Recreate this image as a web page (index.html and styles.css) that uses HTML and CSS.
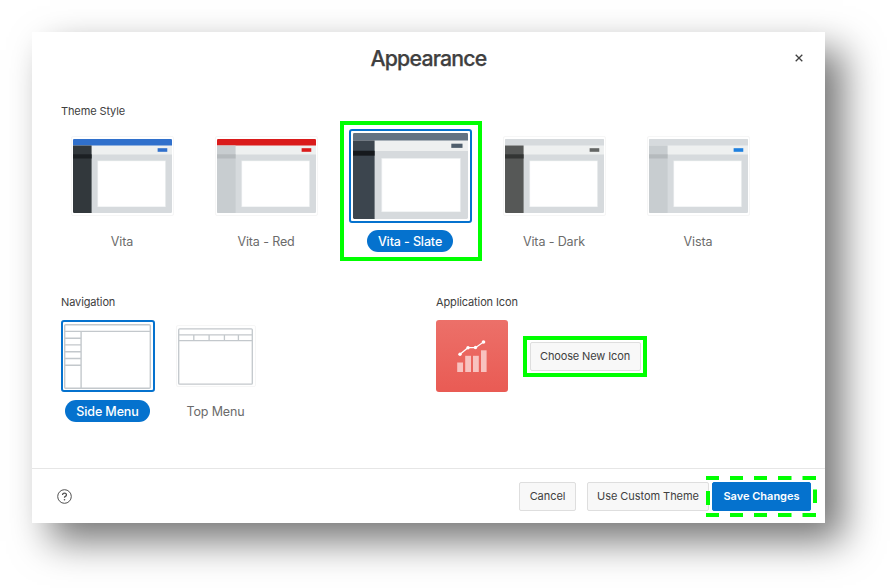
FILE: index.html
```html
<!DOCTYPE html>
<html lang="en">
<head>
<meta charset="utf-8">
<title>Appearance</title>
<link rel="stylesheet" href="styles.css">
</head>
<body>
<svg width="0" height="0" class="defs" aria-hidden="true">
  <symbol id="theme" viewBox="0 0 98.5 74" preserveAspectRatio="none">
    <rect width="98.5" height="74" rx="1.2" fill="#d6dadd"/>
    <rect y="6" width="98.5" height="9.5" fill="#eef0f0"/>
    <path d="M0 6.4V1.2Q0 0 1.2 0H97.3Q98.5 0 98.5 1.2V6.4Z" fill="var(--head)"/>
    <path d="M0 6.4H18.5V74H1.2Q0 74 0 72.8Z" fill="var(--side)"/>
    <rect y="15.3" width="18.5" height="4.2" fill="var(--current)"/>
    <rect x="84.2" y="9.2" width="9.6" height="3.6" fill="var(--accent)"/>
    <rect x="24.3" y="21.6" width="68" height="46.4" fill="#eceff0"/>
    <rect x="25" y="22.2" width="66.6" height="45.2" fill="#fff"/>
  </symbol>
</svg>
<main class="dialog">
  <header class="header">
    <h1>Appearance</h1>
    <button class="close" aria-label="Close"><svg width="8" height="8" viewBox="0 0 8 8"><path d="M.7.7 7.3 7.3M7.3.7.7 7.3" fill="none" stroke="#404040" stroke-width="1.3"/></svg></button>
  </header>
  <section class="body">
    <h2>Theme Style</h2>
    <div class="themes">
      <div class="option vita"><div class="frame"><span class="thumb"><svg><use href="#theme"/></svg></span></div><span class="label">Vita</span></div>
      <div class="option red"><div class="frame"><span class="thumb"><svg><use href="#theme"/></svg></span></div><span class="label">Vita - Red</span></div>
      <div class="option slate selected"><div class="frame"><span class="thumb"><svg><use href="#theme"/></svg></span></div><span class="label">Vita - Slate</span><i class="mark"></i></div>
      <div class="option dark"><div class="frame"><span class="thumb"><svg><use href="#theme"/></svg></span></div><span class="label">Vita - Dark</span></div>
      <div class="option vista"><div class="frame"><span class="thumb"><svg><use href="#theme"/></svg></span></div><span class="label">Vista</span></div>
    </div>
    <div class="lower">
      <div class="navigation">
        <h2>Navigation</h2>
        <div class="menus">
          <div class="option selected"><div class="frame"><span class="thumb"><svg viewBox="0 0 87 65"><g fill="none" stroke="#c3c8cc" stroke-width="1.4"><rect x=".7" y=".7" width="85.6" height="63.6" rx="1"/><path d="M1 7.4H86M17.1 7.4V64M1 14.2H17M1 20.9H17M1 27.7H17M1 34.5H17M1 41.2H17"/></g></svg></span></div><span class="label">Side Menu</span></div>
          <div class="option"><div class="frame"><span class="thumb"><svg viewBox="0 0 74 56"><g fill="none" stroke="#c3c8cc" stroke-width="1.3"><rect x=".7" y=".7" width="72.6" height="54.6" rx="1"/><path d="M1 6.6H73M1 12.3H73M15.6 6.6V12.3M30.7 6.6V12.3M45.8 6.6V12.3M59.6 6.6V12.3"/></g></svg></span></div><span class="label">Top Menu</span></div>
        </div>
      </div>
      <div class="application">
        <h2>Application Icon</h2>
        <div class="icon-row">
          <span class="app-icon"><svg width="72" height="72" viewBox="0 0 72 72"><g fill="#f8c2bf"><rect x="21.2" y="42.5" width="5.8" height="9.5"/><rect x="29.2" y="35.8" width="5.8" height="16.2"/><rect x="37" y="35.8" width="5.8" height="16.2"/><rect x="45" y="30.3" width="5.6" height="21.7"/></g><path d="M24 34.3 32 27.7H39.5L47.5 22" fill="none" stroke="#fff" stroke-width="1.2"/><g fill="#fff"><circle cx="24" cy="34.3" r="1.7"/><circle cx="32" cy="27.7" r="1.7"/><circle cx="39.5" cy="27.5" r="1.7"/><circle cx="47.5" cy="22" r="1.8"/></g></svg></span>
          <span class="choose-mark"><button class="button choose">Choose New Icon</button></span>
        </div>
      </div>
    </div>
  </section>
  <footer class="footer">
    <svg class="help" width="15" height="15" viewBox="0 0 15 15"><circle cx="7.5" cy="7.5" r="6.8" fill="none" stroke="#505050"/><path d="M5.6 6Q5.5 4.2 7.5 4.2T9.4 5.9Q9.4 6.8 8.3 7.4Q7.5 7.8 7.5 8.8" fill="none" stroke="#505050" stroke-width="1.3"/><circle cx="7.5" cy="10.7" r=".8" fill="#505050"/></svg>
    <button class="button cancel">Cancel</button>
    <button class="button custom">Use Custom Theme</button>
    <span class="save-wrap"><button class="button save">Save Changes</button>
      <svg class="dashes" width="111" height="41" viewBox="0 0 111 41"><g stroke="#0f0" stroke-width="4"><path d="M0 2H13M24 2H37M48 2H61M72 2H85.500M96.500 2H110M0 39H13M24 39H37M48 39H61M72 39H85.500M96.500 39H110M2 15V29M109 13.500V27"/></g></svg>
    </span>
  </footer>
</main>
</body>
</html>
```
FILE: styles.css
```css
* { box-sizing: border-box; }
body { margin: 0; padding: 32px; height: 588px; overflow: hidden; background: #fff; color: #404040; font-family: Inter, sans-serif; }
.defs { position: absolute; }
svg { display: block; }
button { font-family: inherit; }
h1, h2 { margin: 0; }
.dialog { width: 793px; height: 491px; background: #fff; box-shadow: 18px 18px 36px rgba(0, 0, 0, .54); display: flex; flex-direction: column; }
.header { height: 51px; display: grid; grid-template-columns: 52px 1fr 52px; align-items: center; }
h1 { grid-column: 2; text-align: center; font-size: 21.3px; line-height: 28px; font-weight: 500; letter-spacing: -.8px; -webkit-text-stroke: .25px #404040; }
.close { padding: 0; border: 0; background: none; justify-self: center; }
.body { flex: 1; padding: 20px 29px 0; }
h2 { height: 16px; font-size: 11px; line-height: 16px; font-weight: 400; letter-spacing: -.12px; }
.themes { margin: 10px 0 0 -11px; display: grid; grid-template-columns: repeat(5, 144px); }
.option { display: flex; flex-direction: column; align-items: center; position: relative; }
.frame { height: 94px; display: grid; place-items: center; }
.thumb { display: block; width: 103px; height: 79px; padding: 1.5px; border: 1px solid #f6f6f6; border-radius: 2px; }
.themes .option:not(.selected) .thumb { width: 103px; height: 80px; padding: 2px 1px 2px 1px; }
.thumb svg { width: 100%; height: 100%; }
.selected .thumb { width: 123px; height: 94px; padding: 2px; border: 2px solid #0572ce; border-radius: 3px; }
.label { margin-top: 7px; height: 22px; line-height: 23px; padding: 0 11px; border-radius: 11px; font-size: 12.5px; letter-spacing: -.12px; color: #6b6b6b; white-space: nowrap; }
.selected .label { background: #0572ce; color: #fff; font-weight: 500; }
.mark { position: absolute; left: 2px; top: -8px; width: 142px; height: 140px; border: 4px solid #0f0; }
.vita { --head: #3070cc; --side: #32383c; --current: #1c2023; --accent: #3070cc; }
.red { --head: #da1b1b; --side: #c8cdd0; --current: #b5babd; --accent: #da1b1b; }
.slate { --head: #637282; --side: #3c454e; --current: #16191d; --accent: #4f5e6c; }
.dark { --head: #d6dadd; --side: #565857; --current: #333534; --accent: #646665; }
.vista { --head: #d6dadd; --side: #c8cdd0; --current: #b5babd; --accent: #1f80df; }
.lower { margin-top: 42px; display: grid; grid-template-columns: 375px 1fr; }
.menus { margin: 10px 0 0 -7.500px; display: grid; grid-template-columns: 108px 108px; }
.menus .frame { height: 72px; }
.menus .thumb { width: 80px; height: 62px; }
.menus .selected .thumb { width: 94px; height: 72px; padding: 1.5px; }
.menus .label { margin-top: 8px; }
.icon-row { margin-top: 10px; display: flex; align-items: center; gap: 15px; }
.app-icon { width: 72px; height: 72px; border-radius: 3px; background: linear-gradient(#ec7069, #e95b54); }
.choose-mark { width: 124px; height: 41px; border: 4px solid #0f0; display: grid; place-items: center; }
.button { height: 29px; padding: 0; border: 1px solid #dedede; border-radius: 2px; background: #f8f8f8; color: #404040; font-size: 11px; line-height: 17px; letter-spacing: -.06px; white-space: nowrap; }
.choose { width: 111px; letter-spacing: -.13px; }
.footer { height: 55px; border-top: 1px solid #e6e6e6; padding: 0 14px 0 25px; display: flex; align-items: center; }
.cancel { width: 57px; margin-left: auto; margin-right: 11px; }
.custom { width: 122px; margin-right: 3px; }
.save-wrap { position: relative; }
.save { display: block; width: 99px; background: #0572ce; border-color: #0572ce; color: #fff; font-weight: 600; letter-spacing: 0; }
.dashes { position: absolute; left: -6px; top: -6px; }
```
